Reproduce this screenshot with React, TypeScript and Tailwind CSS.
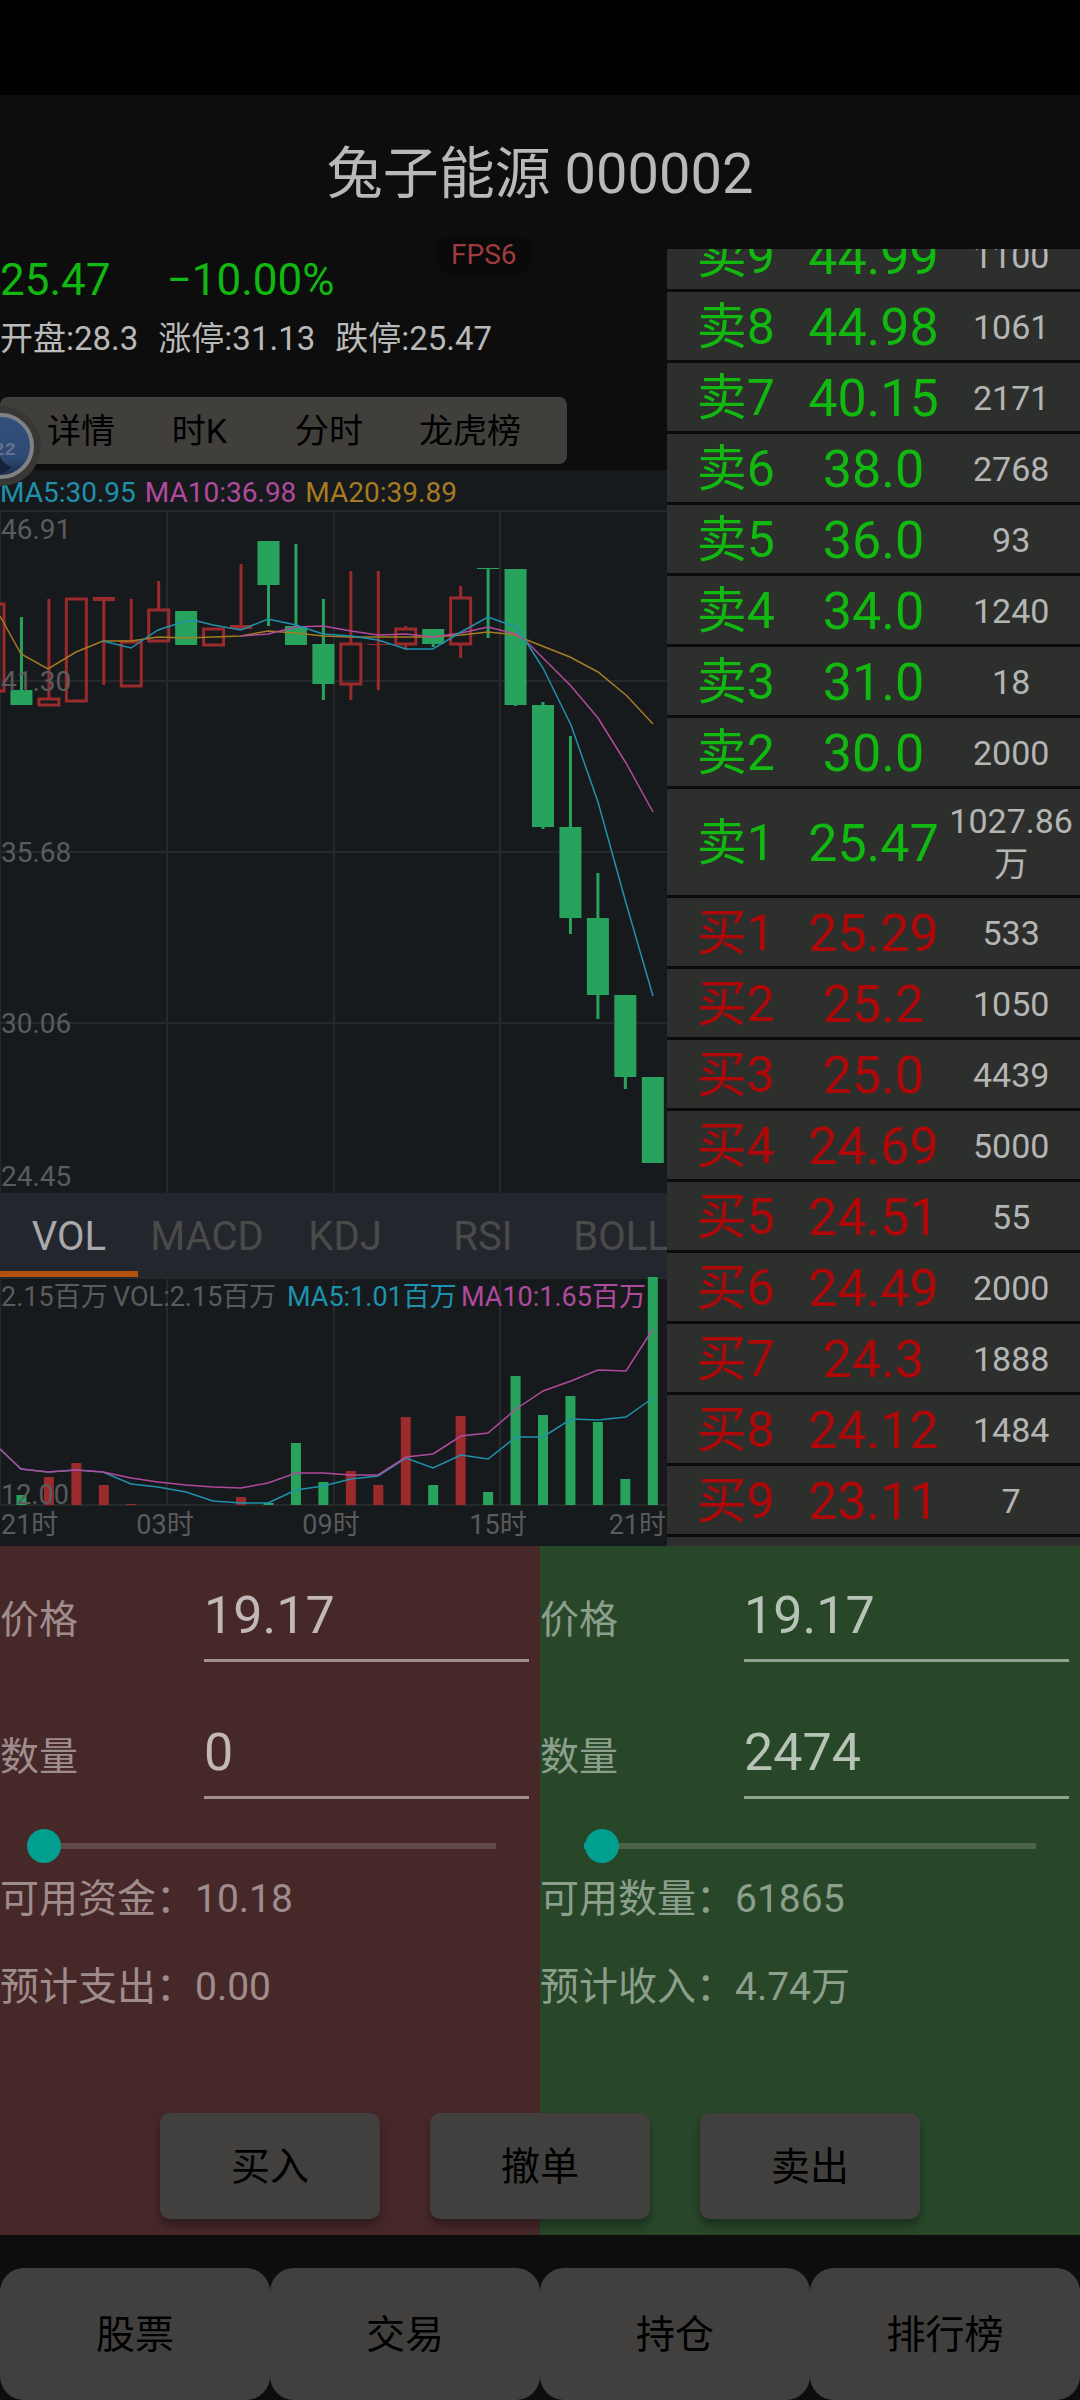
import { useState } from "react";

const GREEN = "#27a35d";
const RED = "#9b2a2c";
const CYAN = "#1e92ad";
const MAGENTA = "#b04a9c";
const GOLD = "#a77b22";
const AXIS = "#5a5b5d";
const GRID = "#25292c";

const STEP = 27.45;
const FIRST = -6;
const centre = (i: number) => FIRST + i * STEP;

type Candle = { up: boolean; high: number; low: number; top: number; bottom: number };

const candle = (up: boolean, high: number, top: number, bottom: number, low: number): Candle => ({
  up,
  high,
  top,
  bottom,
  low,
});

const candles: Candle[] = [
  candle(true, 603, 603, 692, 692),
  candle(false, 617, 690, 705, 705),
  candle(true, 599, 698, 706, 706),
  candle(true, 598, 598, 702, 702),
  candle(true, 598, 597, 601, 685),
  candle(true, 599, 641, 687, 687),
  candle(true, 581, 609, 642, 642),
  candle(false, 611, 611, 645, 645),
  candle(true, 628, 628, 646, 646),
  candle(true, 564, 625, 629, 629),
  candle(false, 541, 541, 585, 626),
  candle(false, 544, 626, 645, 645),
  candle(false, 599, 644, 684, 700),
  candle(true, 571, 643, 685, 700),
  candle(true, 571, 644, 645, 690),
  candle(true, 626, 628, 645, 650),
  candle(false, 629, 629, 644, 647),
  candle(true, 586, 597, 645, 658),
  candle(false, 568, 568, 569, 638),
  candle(false, 569, 569, 705, 706),
  candle(false, 702, 705, 827, 829),
  candle(false, 736, 827, 918, 934),
  candle(false, 873, 918, 995, 1019),
  candle(false, 995, 995, 1077, 1089),
  candle(false, 1077, 1077, 1163, 1163),
];

const volumeTops = [
  1505, 1495, 1477, 1463, 1485, 1504, 1505, 1505, 1505, 1497, 1503, 1443, 1482, 1471, 1485, 1417,
  1485, 1416, 1492, 1376, 1415, 1396, 1422, 1479, 1277,
];

const priceLines = [
  {
    color: GOLD,
    points:
      "0,616 21,654 48,669 76,652 103,641 131,641 158,637 186,638 213,637 241,636 268,631 296,633 323,636 351,637 378,637 406,637 433,637 461,635 488,632 516,635 527,640 570,657 598,672 627,696 653,724",
  },
  {
    color: MAGENTA,
    points:
      "241,636 268,634 296,627 323,626 351,631 378,635 406,634 433,637 461,633 488,627 516,634 527,642 543,658 571,686 598,718 626,763 653,812",
  },
  {
    color: CYAN,
    points:
      "103,641 131,648 158,630 186,621 197,621 213,625 241,630 268,619 296,625 323,634 351,636 378,640 406,649 433,649 461,632 488,617 516,627 527,643 543,668 571,725 598,802 626,903 653,996",
  },
];

const volumeLines = [
  {
    color: CYAN,
    points:
      "0,1449 21,1469 48,1472 76,1470 103,1472 131,1484 158,1487 186,1492 213,1501 241,1503 268,1503 296,1490 323,1486 351,1479 378,1476 406,1458 433,1468 461,1455 488,1459 516,1437 543,1437 571,1419 598,1420 626,1417 653,1398",
  },
  {
    color: MAGENTA,
    points:
      "0,1449 21,1469 48,1472 76,1470 103,1472 131,1478 158,1482 186,1485 213,1487 241,1488 268,1483 296,1473 323,1473 351,1475 378,1475 406,1457 433,1454 461,1436 488,1433 516,1409 543,1391 571,1381 598,1370 626,1371 653,1329",
  },
];

const sells = [
  ["卖9", "44.99", "1100"],
  ["卖8", "44.98", "1061"],
  ["卖7", "40.15", "2171"],
  ["卖6", "38.0", "2768"],
  ["卖5", "36.0", "93"],
  ["卖4", "34.0", "1240"],
  ["卖3", "31.0", "18"],
  ["卖2", "30.0", "2000"],
  ["卖1", "25.47", "1027.86万"],
];

const buys = [
  ["买1", "25.29", "533"],
  ["买2", "25.2", "1050"],
  ["买3", "25.0", "4439"],
  ["买4", "24.69", "5000"],
  ["买5", "24.51", "55"],
  ["买6", "24.49", "2000"],
  ["买7", "24.3", "1888"],
  ["买8", "24.12", "1484"],
  ["买9", "23.11", "7"],
];

function PriceChart() {
  return (
    <svg viewBox="0 510 667 683" className="block w-full" role="img" aria-label="K线图">
      <g stroke={GRID} strokeWidth="2">
        {[511, 681, 852, 1023].map((y) => (
          <line key={y} x1="0" x2="667" y1={y} y2={y} />
        ))}
        {[0, 167, 334, 500].map((x) => (
          <line key={x} x1={x} x2={x} y1="510" y2="1193" />
        ))}
      </g>
      {candles.map((c, i) => {
        const x = centre(i);
        const h = c.bottom - c.top;
        if (c.up && h > 4) {
          return (
            <g key={i} stroke={RED} strokeWidth="3" fill="none">
              <line x1={x} x2={x} y1={c.high} y2={c.top} />
              <line x1={x} x2={x} y1={c.bottom} y2={c.low} />
              <rect x={x - 10} y={c.top + 1} width="20" height={h - 2} />
            </g>
          );
        }
        const fill = c.up ? RED : GREEN;
        return (
          <g key={i} fill={fill}>
            <rect x={x - 1.5} y={c.high} width="3" height={c.low - c.high} />
            <rect x={x - 11} y={c.top} width="22" height={h} />
          </g>
        );
      })}
      {priceLines.map((l) => (
        <polyline key={l.color} points={l.points} fill="none" stroke={l.color} strokeWidth="1.5" />
      ))}
      <g fill={AXIS} fontSize="28">
        <text x="1" y="539">46.91</text>
        <text x="1" y="691">41.30</text>
        <text x="1" y="862">35.68</text>
        <text x="1" y="1033">30.06</text>
        <text x="1" y="1186">24.45</text>
      </g>
    </svg>
  );
}

function VolumeChart() {
  return (
    <svg viewBox="0 1277 667 269" className="block w-full" role="img" aria-label="成交量">
      <g stroke={GRID} strokeWidth="2">
        <line x1="0" x2="667" y1="1278" y2="1278" />
        <line x1="0" x2="667" y1="1505" y2="1505" />
        {[0, 167, 334, 500].map((x) => (
          <line key={x} x1={x} x2={x} y1="1277" y2="1505" />
        ))}
      </g>
      {volumeTops.map((top, i) => (
        <rect
          key={i}
          x={centre(i) - 5}
          y={top}
          width="10"
          height={1505 - top}
          fill={candles[i].up ? RED : GREEN}
        />
      ))}
      {volumeLines.map((l) => (
        <polyline key={l.color} points={l.points} fill="none" stroke={l.color} strokeWidth="1.5" />
      ))}
      <g fill={AXIS} fontSize="27">
        <text x="1" y="1306">2.15百万</text>
        <text x="113" y="1306">VOL:2.15百万</text>
        <text x="287" y="1306" fill={CYAN}>MA5:1.01百万</text>
        <text x="461" y="1306" fill={MAGENTA}>MA10:1.65百万</text>
        <text x="1" y="1504">12.00</text>
        <text x="1" y="1534">21时</text>
        <text x="165" y="1534" textAnchor="middle">03时</text>
        <text x="331" y="1534" textAnchor="middle">09时</text>
        <text x="498" y="1534" textAnchor="middle">15时</text>
        <text x="666" y="1534" textAnchor="end">21时</text>
      </g>
    </svg>
  );
}

function FloatingBall() {
  return (
    <svg viewBox="0 0 44 84" className="absolute -bottom-[24px] left-0 h-[84px] w-[44px]" aria-hidden="true">
      <defs>
        <linearGradient id="ball" x1="0" y1="0" x2="0" y2="1">
          <stop offset="0" stopColor="#34507a" />
          <stop offset="0.7" stopColor="#2e4a74" />
          <stop offset="1" stopColor="#1a2a48" />
        </linearGradient>
      </defs>
      <circle cx="1" cy="42" r="40" fill="#393735" />
      <circle cx="1" cy="42" r="31" fill="url(#ball)" stroke="#7f8186" strokeWidth="4" />
      <path d="M0 52 C2 58 6 61 11 63 C8 67 4 69 0 69 Z" fill="#152136" />
      <text x="16" y="51" textAnchor="end" fontSize="19" fontWeight="700" fill="#62738f" fontFamily="Liberation Mono, monospace">
        22
      </text>
    </svg>
  );
}

function OrderRow({ row, tone }: { row: string[]; tone: string }) {
  return (
    <tr className="h-[71px]">
      <th
        scope="row"
        className={`border-b-[3px] border-[#0b0c0b] pt-[11px] pb-[9px] text-[50px] leading-[43px] font-normal ${tone}`}
      >
        {row[0]}
      </th>
      <td className={`border-b-[3px] border-[#0b0c0b] pt-[11px] pb-[9px] text-[52px] leading-[43px] ${tone}`}>
        {row[1]}
      </td>
      <td className="border-b-[3px] border-[#0b0c0b] pt-[11px] pb-[9px] text-[34px] leading-[43px] text-[#b4b5b4]">
        {row[2]}
      </td>
    </tr>
  );
}

type SideProps = {
  id: string;
  panel: string;
  label: string;
  input: string;
  track: string;
  max: number;
  initialAmount: number;
  available: string;
  estimate: string;
};

function TradeSide(p: SideProps) {
  const [price, setPrice] = useState("19.17");
  const [amount, setAmount] = useState(p.initialAmount);
  const share = p.max > 0 ? amount / p.max : 0;
  const mid = `calc(17px + (100% - 34px) * ${share})`;
  const end = "calc(100% - 17px)";
  const background = `linear-gradient(to right, transparent 17px, #009f8f 17px, #009f8f ${mid}, ${p.track} ${mid}, ${p.track} ${end}, transparent ${end}) center / 100% 6px no-repeat`;
  return (
    <section className={`pt-[26px] pb-[223px] ${p.panel}`}>
      <div className="flex flex-col gap-[47px] pr-[11px]">
        <div className="flex items-center">
          <label htmlFor={`${p.id}-price`} className={`w-[204px] shrink-0 pt-[6px] text-[39px] leading-[50px] ${p.label}`}>
            价格
          </label>
          <input
            id={`${p.id}-price`}
            value={price}
            onChange={(e) => setPrice(e.target.value)}
            className={`h-[90px] w-full min-w-0 rounded-none border-b-[3px] bg-transparent text-[52px] outline-none ${p.input}`}
          />
        </div>
        <div className="flex items-center">
          <label htmlFor={`${p.id}-amount`} className={`w-[204px] shrink-0 pt-[6px] text-[39px] leading-[50px] ${p.label}`}>
            数量
          </label>
          <input
            id={`${p.id}-amount`}
            value={amount}
            onChange={(e) => setAmount(Number(e.target.value) || 0)}
            className={`h-[90px] w-full min-w-0 rounded-none border-b-[3px] bg-transparent text-[52px] outline-none ${p.input}`}
          />
        </div>
      </div>
      <div className="mt-[30px] px-[27px]">
        <input
          type="range"
          aria-label="数量"
          min={0}
          max={p.max}
          value={amount}
          onChange={(e) => setAmount(Number(e.target.value))}
          style={{ background }}
          className="block h-[34px] w-full appearance-none [&::-webkit-slider-thumb]:size-[34px] [&::-webkit-slider-thumb]:appearance-none [&::-webkit-slider-thumb]:rounded-full [&::-webkit-slider-thumb]:bg-[#009f8f]"
        />
      </div>
      <p className={`mt-[11px] text-[39px] leading-[50px] ${p.label}`}>{p.available}</p>
      <p className={`mt-[38px] text-[39px] leading-[50px] ${p.label}`}>{p.estimate}</p>
    </section>
  );
}

export default function App() {
  const [tab, setTab] = useState("VOL");
  return (
    <div className="min-h-screen overflow-x-hidden bg-[#0d0d0d] font-['Roboto','Noto_Sans_CJK_SC',sans-serif] text-[#b9b9b9]">
      <div className="h-[95px] bg-black" />
      <header className="flex h-[154px] items-center justify-center pt-[4px]">
        <h1 className="text-[56px] font-normal">兔子能源 000002</h1>
      </header>

      <main>
        <div className="grid grid-cols-[667fr_413fr]">
          <div className="relative min-w-0">
            <span className="absolute -top-[13px] left-[435px] rounded-full bg-[#090909] px-[16px] text-[28px] leading-[38px] text-[#a03b3d]">
              FPS6
            </span>
            <div className="flex h-[60px] items-center gap-[56px] pt-[2px] text-[44px] text-[#10b810]">
              <span>25.47</span>
              <span>−10.00%</span>
            </div>
            <div className="flex h-[60px] items-center gap-5 text-[33px] whitespace-nowrap">
              <span>开盘:28.3</span>
              <span>涨停:31.13</span>
              <span>跌停:25.47</span>
            </div>
            <div className="pt-[28px] pb-[6px]">
              <div className="relative w-[85%]">
                <div className="grid h-[67px] grid-cols-[124fr_113fr_146fr_136fr] rounded-[8px] bg-[#413f3c] pt-[2px] pr-[29px] pl-[19px] text-[34px] text-black">
                  <button type="button">详情</button>
                  <button type="button">时K</button>
                  <button type="button">分时</button>
                  <button type="button" className="whitespace-nowrap">龙虎榜</button>
                </div>
                <FloatingBall />
              </div>
            </div>

            <div className="bg-[#171a1c]">
              <div className="flex h-[40px] gap-[9px] pt-[3px] text-[28px] leading-[40px] whitespace-nowrap">
                <span className="text-[#1e92ad]">MA5:30.95</span>
                <span className="text-[#b04a9c]">MA10:36.98</span>
                <span className="text-[#a77b22]">MA20:39.89</span>
              </div>
              <PriceChart />
              <div className="flex h-[84px] overflow-hidden bg-[#24262e]">
                {["VOL", "MACD", "KDJ", "RSI", "BOLL"].map((name) => (
                  <button
                    key={name}
                    type="button"
                    onClick={() => setTab(name)}
                    className={
                      tab === name
                        ? "w-[138px] shrink-0 border-y-[6px] border-t-transparent border-b-[#b5500c] pt-[3px] text-[40px] text-[#a9a9ab]"
                        : "w-[138px] shrink-0 border-y-[6px] border-transparent pt-[3px] text-[40px] text-[#4a4a4b]"
                    }
                  >
                    {name}
                  </button>
                ))}
              </div>
              <VolumeChart />
            </div>
          </div>

          <div className="overflow-hidden bg-[#2d2f2d]">
            <table className="-mt-7 w-full table-fixed border-separate border-spacing-0 text-center">
              <tbody>
                {sells.map((r) => (
                  <OrderRow key={r[0]} row={r} tone="text-[#10b810]" />
                ))}
                {buys.map((r) => (
                  <OrderRow key={r[0]} row={r} tone="text-[#b00808]" />
                ))}
              </tbody>
            </table>
          </div>
        </div>

        <div className="relative grid grid-cols-2">
          <TradeSide
            id="buy"
            panel="bg-[#472829]"
            label="text-[#9f8c8c]"
            input="border-[#a38f8f] text-[#c2b8b8]"
            track="#614848"
            max={100}
            initialAmount={0}
            available="可用资金：10.18"
            estimate="预计支出：0.00"
          />
          <TradeSide
            id="sell"
            panel="bg-[#284729]"
            label="text-[#8b9f8c]"
            input="border-[#8ea38f] text-[#b8c3b8]"
            track="#4a634a"
            max={61865}
            initialAmount={2474}
            available="可用数量：61865"
            estimate="预计收入：4.74万"
          />
          <div className="absolute inset-x-0 bottom-4 flex justify-center gap-[50px] text-[39px] text-black">
            {["买入", "撤单", "卖出"].map((name) => (
              <button
                key={name}
                type="button"
                className="h-[106px] w-[220px] rounded-[10px] bg-[#42403e] pt-[3px] shadow-[0_6px_10px_rgba(0,0,0,0.35)]"
              >
                {name}
              </button>
            ))}
          </div>
        </div>
      </main>

      <nav className="mt-[33px] grid grid-cols-4 text-[39px] text-black">
        {["股票", "交易", "持仓", "排行榜"].map((name) => (
          <button key={name} type="button" className="h-[132px] rounded-[24px] bg-[#42403e] pt-[3px]">
            {name}
          </button>
        ))}
      </nav>
    </div>
  );
}
